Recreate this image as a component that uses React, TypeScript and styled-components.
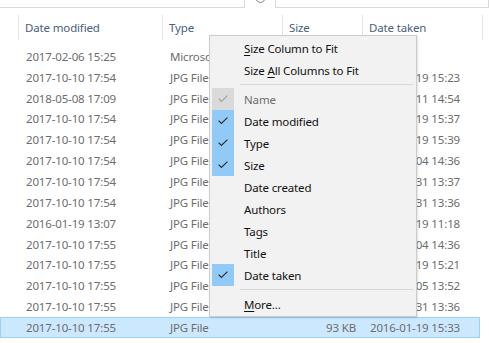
import React from 'react';
import styled, { createGlobalStyle } from 'styled-components';
import { ChevronDown, RotateCw } from 'lucide-react';

type FileRow = {
    modified: string;
    type: string;
    size: string;
    taken: string;
    selected?: boolean;
};

type MenuEntry =
    | { kind: 'item'; label: React.ReactNode; check?: 'on' | 'disabled' | 'none'; muted?: boolean }
    | { kind: 'separator' };

const rows: FileRow[] = [
    { modified: '2017-02-06 15:25', type: 'Microsoft Word Document', size: '24 KB', taken: '' },
    { modified: '2017-10-10 17:54', type: 'JPG File', size: '2,814 KB', taken: '2016-01-19 15:23' },
    { modified: '2018-05-08 17:09', type: 'JPG File', size: '1,902 KB', taken: '2017-05-11 14:54' },
    { modified: '2017-10-10 17:54', type: 'JPG File', size: '2,640 KB', taken: '2016-01-19 15:37' },
    { modified: '2017-10-10 17:54', type: 'JPG File', size: '2,711 KB', taken: '2016-01-19 15:39' },
    { modified: '2017-10-10 17:54', type: 'JPG File', size: '3,105 KB', taken: '2017-06-04 14:36' },
    { modified: '2017-10-10 17:54', type: 'JPG File', size: '1,488 KB', taken: '2016-12-31 13:37' },
    { modified: '2017-10-10 17:54', type: 'JPG File', size: '1,512 KB', taken: '2016-12-31 13:36' },
    { modified: '2016-01-19 13:07', type: 'JPG File', size: '2,233 KB', taken: '2016-01-19 11:18' },
    { modified: '2017-10-10 17:55', type: 'JPG File', size: '3,020 KB', taken: '2017-06-04 14:36' },
    { modified: '2017-10-10 17:55', type: 'JPG File', size: '2,587 KB', taken: '2016-01-19 15:21' },
    { modified: '2017-10-10 17:55', type: 'JPG File', size: '1,977 KB', taken: '2017-07-05 13:52' },
    { modified: '2017-10-10 17:55', type: 'JPG File', size: '1,430 KB', taken: '2016-12-31 13:36' },
    { modified: '2017-10-10 17:55', type: 'JPG File', size: '93 KB', taken: '2016-01-19 15:33', selected: true },
];

const menu: MenuEntry[] = [
    { kind: 'item', label: <><u>S</u>ize Column to Fit</> },
    { kind: 'item', label: <>Size <u>A</u>ll Columns to Fit</> },
    { kind: 'separator' },
    { kind: 'item', label: 'Name', check: 'disabled', muted: true },
    { kind: 'item', label: 'Date modified', check: 'on' },
    { kind: 'item', label: 'Type', check: 'on' },
    { kind: 'item', label: 'Size', check: 'on' },
    { kind: 'item', label: 'Date created' },
    { kind: 'item', label: 'Authors' },
    { kind: 'item', label: 'Tags' },
    { kind: 'item', label: 'Title' },
    { kind: 'item', label: 'Date taken', check: 'on' },
    { kind: 'separator' },
    { kind: 'item', label: <><u>M</u>ore...</> },
];

const COLUMNS = '18px 144px 120px 80px 120px 7px';

const GlobalStyle = createGlobalStyle`
    html, body {
        margin: 0;
        padding: 0;
        background: #ffffff;
    }
    body {
        font-family: 'Noto Sans', 'Segoe UI', sans-serif;
        font-size: 11.5px;
        letter-spacing: -0.15px;
    }
`;

const Window = styled.div`
    position: relative;
    width: 489px;
    height: 343px;
    overflow: hidden;
    background: #ffffff;
`;

/* address / search bar, mostly scrolled out of the shot */
const TopBar = styled.div`
    height: 8px;
    display: flex;
    align-items: flex-end;
    overflow: hidden;
`;

const AddressBox = styled.div`
    width: 245px;
    height: 24px;
    flex: none;
    box-sizing: border-box;
    border-bottom: 1px solid #d9d9d9;
    border-right: 1px solid #d9d9d9;
    display: flex;
    align-items: flex-end;
    justify-content: flex-end;
    padding: 0 1px 7px 0;
    color: #555;
`;

const RefreshButton = styled.div`
    width: 30px;
    height: 24px;
    flex: none;
    display: flex;
    align-items: flex-end;
    justify-content: center;
    padding-bottom: 4px;
    box-sizing: border-box;
    color: #666;
`;

const SearchBox = styled.div`
    flex: 1;
    height: 24px;
    box-sizing: border-box;
    border: 1px solid #d9d9d9;
    border-top: none;
    padding: 0 0 6px 7px;
    display: flex;
    align-items: flex-end;
    color: #6d6d6d;
    white-space: nowrap;
`;

const HeaderRow = styled.div`
    display: grid;
    grid-template-columns: ${COLUMNS};
    height: 38px;
    padding-top: 7px;
    box-sizing: border-box;
`;

const HeaderCell = styled.div<{ $blank?: boolean }>`
    height: 25px;
    border-left: ${p => (p.$blank ? 'none' : '1px solid #e5e5e5')};
    display: flex;
    align-items: center;
    padding-left: 6px;
    color: #4c607a;
    white-space: nowrap;
    overflow: hidden;
`;

const RowList = styled.div`
    display: flex;
    flex-direction: column;
`;

const Row = styled.div<{ $selected?: boolean }>`
    display: grid;
    grid-template-columns: ${COLUMNS};
    width: 480px;
    height: 20.85px;
    box-sizing: border-box;
    align-items: center;
    color: #6d6d6d;
    white-space: nowrap;
    background: ${p => (p.$selected ? '#cce8ff' : 'transparent')};
    border: 1px solid ${p => (p.$selected ? '#99d1ff' : 'transparent')};
`;

const Cell = styled.div<{ $right?: boolean }>`
    overflow: hidden;
    padding: 0 7px;
    text-align: ${p => (p.$right ? 'right' : 'left')};
`;

const Menu = styled.div`
    position: absolute;
    left: 209px;
    top: 35px;
    width: 208px;
    box-sizing: border-box;
    background: #f2f2f2;
    border: 1px solid #cccccc;
    box-shadow: 1px 1px 2px rgba(0, 0, 0, 0.12);
    padding: 1px 2px;
    display: flex;
    flex-direction: column;
    color: #111;
`;

const MenuItem = styled.div<{ $muted?: boolean }>`
    height: 22px;
    display: flex;
    align-items: center;
    color: ${p => (p.$muted ? '#6d6d6d' : '#111')};
    white-space: nowrap;
`;

const MenuLabel = styled.span`
    white-space: pre;

    u {
        text-decoration-thickness: 1px;
        text-underline-offset: 2px;
    }
`;

const CheckSlot = styled.div<{ $state: 'on' | 'disabled' | 'none' }>`
    width: 22px;
    height: 22px;
    flex: none;
    margin-right: 10px;
    display: flex;
    align-items: center;
    justify-content: center;
    background: ${p => (p.$state === 'on' ? '#91c9f7' : p.$state === 'disabled' ? '#dadada' : 'transparent')};
    color: ${p => (p.$state === 'disabled' ? '#a0a0a0' : '#2b2b2b')};
`;

const MenuSeparator = styled.div`
    height: 1px;
    margin: 3px 1px 3px 28px;
    background: #d7d7d7;
`;

const Check = () => (
    <svg width="10" height="8" viewBox="0 0 10 8">
        <polyline points="0.6,3.6 3.4,6.4 9.4,0.6" fill="none" stroke="currentColor" strokeWidth="1.2" />
    </svg>
);

export default function App() {
    return (
        <Window>
            <GlobalStyle />
            <TopBar>
                <AddressBox>
                    <ChevronDown size={12} strokeWidth={1.5} />
                </AddressBox>
                <RefreshButton>
                    <RotateCw size={13} strokeWidth={1.5} />
                </RefreshButton>
                <SearchBox>Search Photos</SearchBox>
            </TopBar>

            <HeaderRow>
                <HeaderCell $blank />
                <HeaderCell>Date modified</HeaderCell>
                <HeaderCell>Type</HeaderCell>
                <HeaderCell>Size</HeaderCell>
                <HeaderCell>Date taken</HeaderCell>
                <HeaderCell />
            </HeaderRow>

            <RowList>
                {rows.map((row, i) => (
                    <Row key={i} $selected={row.selected}>
                        <Cell />
                        <Cell>{row.modified}</Cell>
                        <Cell>{row.type}</Cell>
                        <Cell $right>{row.size}</Cell>
                        <Cell>{row.taken}</Cell>
                        <Cell />
                    </Row>
                ))}
            </RowList>

            <Menu>
                {menu.map((entry, i) =>
                    entry.kind === 'separator' ? (
                        <MenuSeparator key={i} />
                    ) : (
                        <MenuItem key={i} $muted={entry.muted}>
                            <CheckSlot $state={entry.check ?? 'none'}>
                                {entry.check && entry.check !== 'none' && <Check />}
                            </CheckSlot>
                            <MenuLabel>{entry.label}</MenuLabel>
                        </MenuItem>
                    )
                )}
            </Menu>
        </Window>
    );
}
